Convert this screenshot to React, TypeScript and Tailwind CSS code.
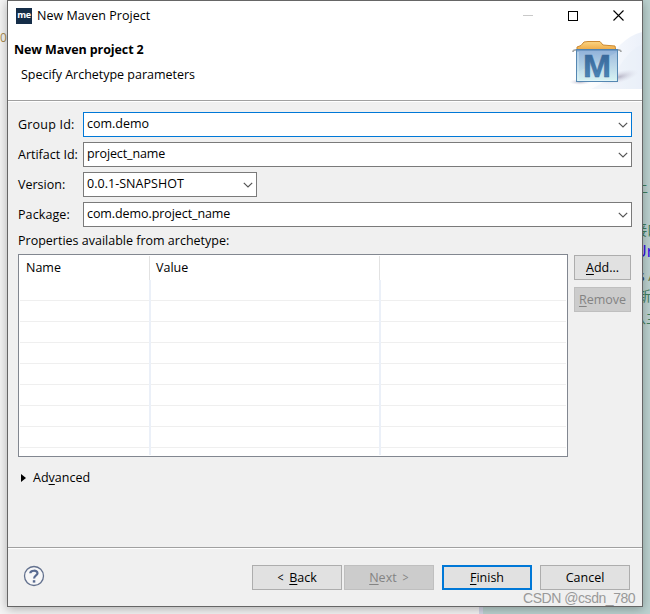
import React from "react";

function Chevron() {
  return (
    <svg width="10" height="6" viewBox="0 0 10 6" className="mr-[3px] mt-px shrink-0">
      <path d="M0.8 0.8 L5 5 L9.2 0.8" fill="none" stroke="#555" strokeWidth="1.2" />
    </svg>
  );
}

type FieldProps = { label: string; value: string; labelCls?: string; valueCls?: string; boxCls?: string };

function Field({ label, value, labelCls = "", valueCls = "", boxCls = "w-[549px] border-[#7a7a7a]" }: FieldProps) {
  return (
    <div className="flex h-[25px] items-center">
      <div className={`w-[65px] shrink-0 ${labelCls}`}>{label}</div>
      <div className={`flex h-[25px] items-center justify-between border bg-white pl-[3px] ${boxCls}`}>
        <span className={`-mt-[2px] ${valueCls}`}>{value}</span>
        <Chevron />
      </div>
    </div>
  );
}

function Button({ children, cls = "" }: { children: React.ReactNode; cls?: string }) {
  return <button className={`flex h-[25px] shrink-0 items-center justify-center whitespace-pre ${cls}`}>{children}</button>;
}

const normal = "border border-[#adadad] bg-[#e1e1e1]";
const disabled = "border border-[#bfbfbf] bg-[#cccccc] text-[#838383]";

function Key({ children }: { children: string }) {
  return <span className="underline decoration-1 underline-offset-2">{children}</span>;
}

function FolderArt() {
  return (
    <svg width="75" height="65" viewBox="0 0 75 65">
      <defs>
        <linearGradient id="box" x1="0" y1="0" x2="0" y2="1">
          <stop offset="0" stopColor="#8fb0d9" />
          <stop offset="0.5" stopColor="#b1d0e5" />
          <stop offset="1" stopColor="#d3f3f1" />
        </linearGradient>
        <linearGradient id="tab" x1="0" y1="0" x2="0" y2="1">
          <stop offset="0" stopColor="#fbd582" />
          <stop offset="1" stopColor="#eda43f" />
        </linearGradient>
        <linearGradient id="letter" x1="0" y1="0" x2="0" y2="1">
          <stop offset="0" stopColor="#356194" />
          <stop offset="1" stopColor="#4f8fbe" />
        </linearGradient>
        <linearGradient id="wave" x1="0" y1="0" x2="1" y2="0">
          <stop offset="0.2" stopColor="#ffffff" />
          <stop offset="1" stopColor="#ecf1fa" />
        </linearGradient>
        <radialGradient id="shade">
          <stop offset="0" stopColor="#aaa6b9" stopOpacity="0.8" />
          <stop offset="1" stopColor="#d8d9e8" stopOpacity="0" />
        </radialGradient>
      </defs>
      <path d="M2 65 C36 60 41 17 75 8 V65Z" fill="url(#wave)" />
      <path d="M24 65 C53 53 57 26 75 21 V65Z" fill="#e5edf8" opacity="0.4" />
      <ellipse cx="52" cy="53" rx="20" ry="6" fill="url(#shade)" transform="rotate(-15 52 53)" />
      <ellipse cx="13" cy="58" rx="11" ry="3" fill="url(#shade)" />
      <path d="M10 27 V23 L14 21.5 L17 18 L21 17.5 H33 L36 21 L48 22 L49 27Z" fill="url(#tab)" stroke="#cc8931" />
      <path d="M6 28 Q6 25.5 10 26 M50 26 Q54 25.5 54 28" fill="none" stroke="#a6a8a8" strokeWidth="1.8" />
      <rect x="9.5" y="25.5" width="41" height="32" fill="url(#box)" stroke="#5587b2" />
      <path d="M10 26 H50" stroke="#4e7fae" />
      <path d="M11 28 V56.5 H49" fill="none" stroke="#dff4fa" opacity="0.7" />
      <path d="M10 48 Q33 38 50 28 V57 H10Z" fill="#fff" opacity="0.12" />
      <text x="16" y="53" fontFamily="Liberation Sans, sans-serif" fontWeight="700" fontSize="31" textLength="28" lengthAdjust="spacingAndGlyphs" fill="url(#letter)" stroke="#3b6a9c" strokeWidth="0.5">M</text>
    </svg>
  );
}

function Backdrop() {
  return (
    <div className="absolute inset-0 overflow-hidden bg-[#f5f5f5]">
      <div className="absolute bottom-0 left-[479px] h-3 w-1 bg-[#d3d6e6]" />
      <div className="absolute bottom-0 left-[483px] right-0 h-3 bg-[#bcd2d0]" />
      <div className="absolute right-0 top-0 h-full w-3 bg-[#bcd2d0]" />
      <span className="absolute left-0 top-[29px] text-[12px] text-[#a98b50]">0</span>
      <div className="absolute left-[634px] top-[176px] font-['Noto_Sans_CJK_SC',sans-serif] text-[14px] leading-[20px] text-[#3f7f5f]">上</div>
      <div className="absolute left-[633px] top-[219px] whitespace-nowrap font-['Noto_Sans_CJK_SC',sans-serif] text-[14px] leading-[20px] text-[#3f7f5f]">接口</div>
      <div className="absolute left-[635px] top-[241px] text-[16px] leading-[20px] text-[#2a00e8]">Ur</div>
      <div className="absolute left-[638px] top-[266px] whitespace-pre text-[14px] leading-[20px] text-[#27436a]">s <span className="text-[#5c7340]">A</span></div>
      <div className="absolute left-[637px] top-[285px] font-['Noto_Sans_CJK_SC',sans-serif] text-[14px] leading-[20px] text-[#3f7f5f]">新</div>
      <div className="absolute left-[632px] top-[307px] whitespace-nowrap font-['Noto_Sans_CJK_SC',sans-serif] text-[14px] leading-[20px] text-[#3f7f5f]">从主</div>
    </div>
  );
}

function TitleBar() {
  return (
    <div className="flex h-[29px] items-center pl-2 pr-[18px]">
      <div className="flex h-4 w-4 items-center justify-center bg-[#152d48] font-['Open_Sans',sans-serif] text-[9px] font-bold leading-none text-white">
        <span className="-mt-[3px] tracking-[-0.4px]">me</span>
      </div>
      <span className="ml-[5px] mt-px text-[12.5px] tracking-[0.05px]">New Maven Project</span>
      <div className="ml-auto flex items-center">
        <div className="h-px w-[10px] bg-[#c9c9c9]" />
        <div className="ml-[35px] h-[10px] w-[10px] border border-black" />
        <svg width="11" height="11" viewBox="0 0 11 11" className="ml-[35px]">
          <path d="M0.5 0.5 L10.5 10.5 M10.5 0.5 L0.5 10.5" stroke="black" strokeWidth="1.1" />
        </svg>
      </div>
    </div>
  );
}

const ROWS = [0, 1, 2, 3, 4, 5, 6, 7];

function PropertyTable() {
  return (
    <div className="flex h-[203px] w-[550px] flex-col overflow-hidden border border-[#828790] bg-white p-px">
      <div className="flex h-[24px] shrink-0 items-center">
        <div className="flex h-full w-[130px] items-center border-r border-[#e2e2e2] pl-[6px]">Name</div>
        <div className="flex h-full w-[230px] items-center border-r border-[#e2e2e2] pl-[6px]">Value</div>
      </div>
      {ROWS.map((i) => (
        <div key={i} className="flex h-[21px] shrink-0 border-b border-[#efefef]">
          <div className="h-[21px] w-[131px] border-r-2 border-[#ebf0f8]" />
          <div className="h-[21px] w-[230px] border-r-2 border-[#ebf0f8]" />
        </div>
      ))}
      <div className="flex flex-1">
        <div className="w-[131px] border-r-2 border-[#ebf0f8]" />
        <div className="w-[230px] border-r-2 border-[#ebf0f8]" />
      </div>
    </div>
  );
}

export default function App() {
  return (
    <div className="relative h-[614px] w-[650px] overflow-hidden font-['Open_Sans','Noto_Sans_CJK_SC',sans-serif] text-[12.5px] leading-[18px] text-black">
      <Backdrop />
      <div className="relative ml-[7px] flex h-[607px] w-[636px] flex-col border border-[#666] bg-[#f0f0f0] shadow-[0_2px_10px_rgba(0,0,0,0.3)]">
        <div className="flex h-[101px] shrink-0 flex-col border-b border-white bg-white">
          <TitleBar />
          <div className="flex h-[70px] justify-between">
            <div className="pl-[6px] pt-[11px]">
              <div className="font-bold tracking-[-0.1px]">New Maven project 2</div>
              <div className="ml-[7px] mt-[7px] tracking-[-0.02px]">Specify Archetype parameters</div>
            </div>
            <div className="-mt-[6px]"><FolderArt /></div>
          </div>
          <div className="h-px shrink-0 bg-[#a0a0a0]" />
        </div>
        <div className="flex h-[445px] shrink-0 flex-col pl-[10px] pt-[10px]">
          <div className="flex flex-col gap-[5px]">
            <Field label="Group Id:" value="com.demo" labelCls="tracking-[0.2px]" boxCls="w-[549px] border-[#0078d7]" />
            <Field label="Artifact Id:" value="project_name" valueCls="tracking-[-0.12px]" />
            <Field label="Version:" value="0.0.1-SNAPSHOT" valueCls="tracking-[0.03px]" boxCls="w-[174px] border-[#7a7a7a]" />
            <Field label="Package:" value="com.demo.project_name" labelCls="tracking-[0.1px]" valueCls="tracking-[-0.08px]" />
          </div>
          <div className="mt-[5px] h-[22px]">Properties available from archetype:</div>
          <div className="flex gap-[6px]">
            <PropertyTable />
            <div className="flex flex-col gap-[7px] pt-px">
              <Button cls={`w-[57px] ${normal}`}><Key>A</Key>dd...</Button>
              <Button cls={`w-[57px] ${disabled}`}><Key>R</Key>emove</Button>
            </div>
          </div>
          <div className="mt-[12px] flex items-center pl-[3px]">
            <svg width="5" height="8" viewBox="0 0 5 8" className="mr-[7px]"><path d="M0 0 L5 4 L0 8Z" /></svg>
            <span>Ad<Key>v</Key>anced</span>
          </div>
        </div>
        <div className="flex flex-1 items-start border-t border-[#a0a0a0] pl-[15px] shadow-[inset_0_1px_0_#fff]">
          <svg width="22" height="22" viewBox="0 0 22 22" className="mt-[17px]">
            <circle cx="11" cy="11" r="9.5" fill="#f7f7f8" stroke="#63718e" strokeWidth="1.3" />
            <path d="M7.3 8.2 C7.3 5.1 14.5 4.7 14.5 8.2 C14.5 10.5 11.1 10.3 11.1 13.5" fill="none" stroke="#596b91" strokeWidth="2.2" />
            <rect x="9.8" y="15.2" width="2.5" height="2.4" fill="#596b91" />
          </svg>
          <div className="ml-[207px] mt-[17px] flex">
            <Button cls={`w-[90px] ${normal}`}><span className="mr-[5px] inline-block scale-x-[0.85]">{"<"}</span><Key>B</Key>ack</Button>
            <Button cls={`ml-[2px] w-[90px] ${disabled}`}><Key>N</Key>ext<span className="ml-[5px] inline-block scale-x-[0.85]">{">"}</span></Button>
            <Button cls="ml-2 w-[90px] border-2 border-[#0078d7] bg-[#e1e1e1]"><Key>F</Key>inish</Button>
            <Button cls={`ml-2 w-[90px] ${normal}`}>Cancel</Button>
          </div>
        </div>
      </div>
      <div className="absolute left-[523px] top-[589px] whitespace-nowrap font-['Liberation_Sans',sans-serif] text-[14px] leading-[18px] tracking-[-0.45px] text-[#999]">CSDN @csdn_780</div>
    </div>
  );
}
